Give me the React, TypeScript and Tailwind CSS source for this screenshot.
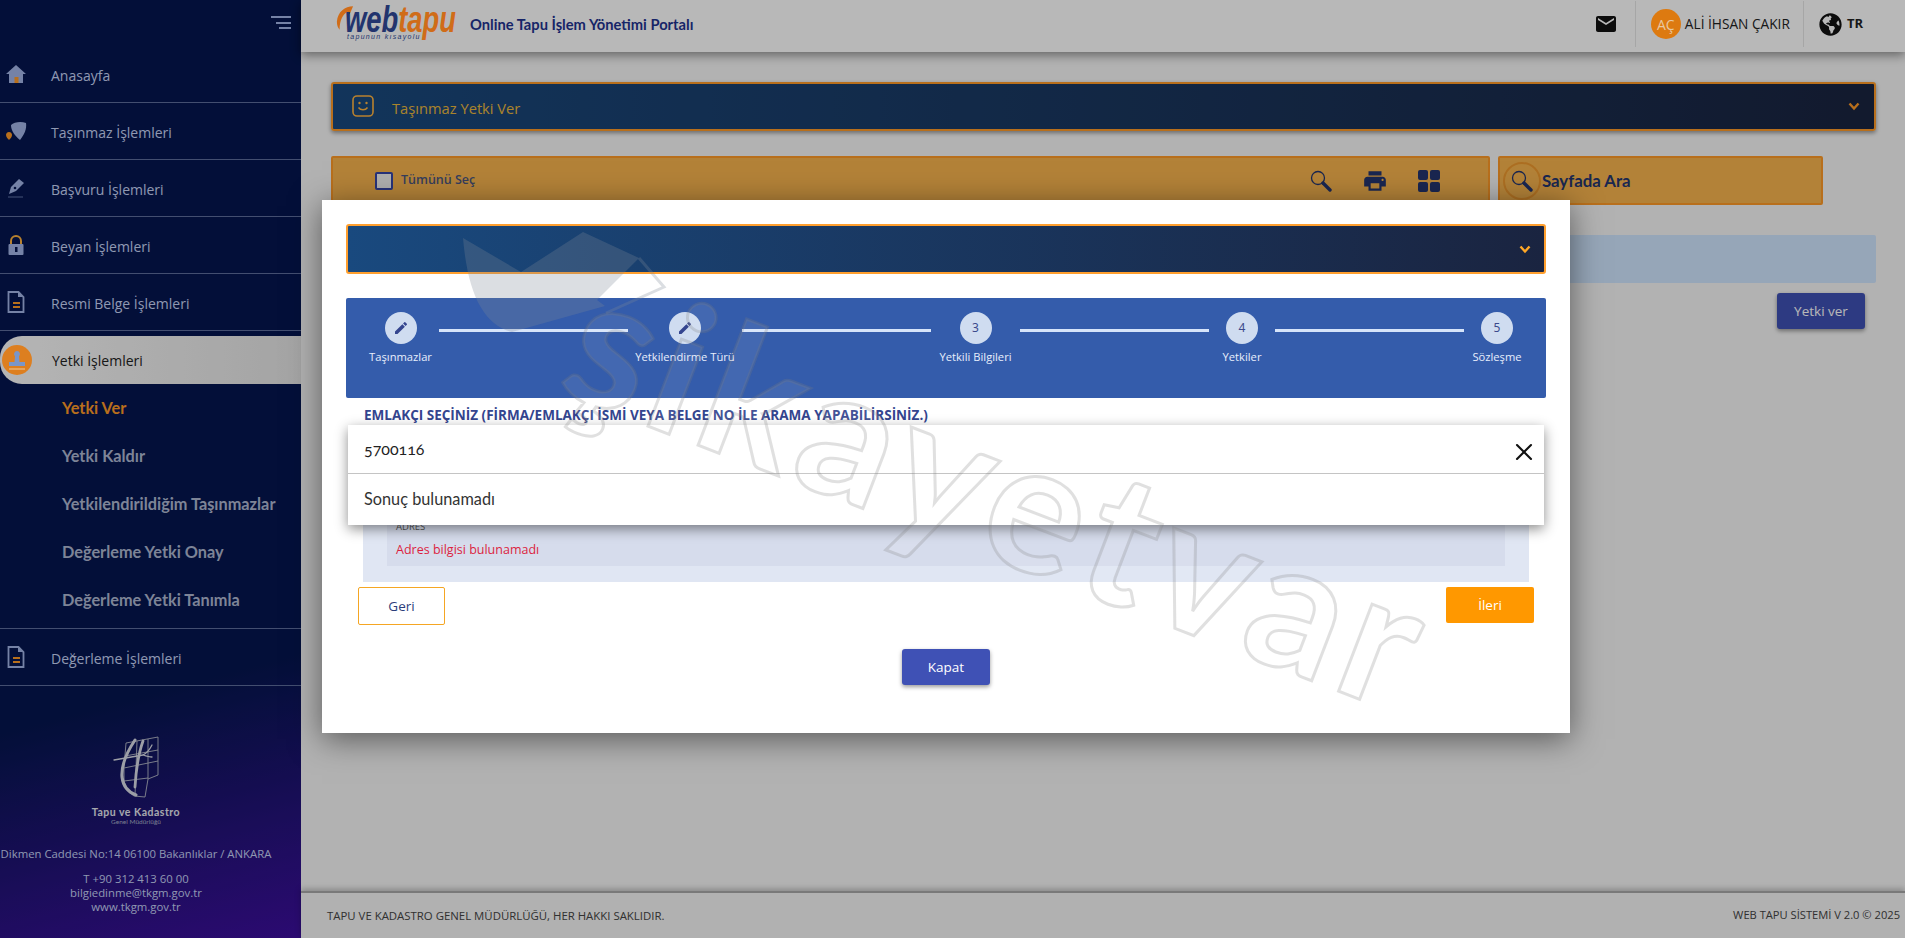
import React from "react";
import { MdEdit, MdEmail, MdPrint } from "react-icons/md";
import { FaGlobeAmericas } from "react-icons/fa";
import { X } from "lucide-react";

const body = "font-['Open_Sans','Noto_Sans',sans-serif]";
const lato = "font-['Lato','Open_Sans',sans-serif]";

function HomeIcon() {
  return (
    <svg width="22" height="20" viewBox="0 0 22 20">
      <path d="M11 1 1 10h3v9h14v-9h3z" fill="#a3b5e6" />
      <rect x="9.5" y="13" width="4" height="6" fill="#ff9a27" />
    </svg>
  );
}
function PinIcon() {
  return (
    <svg width="22" height="20" viewBox="0 0 22 20">
      <path d="M6 4c3-3 10-4 15-2 1 6-2 12-6 17C10 15 6 10 6 4z" fill="#a3b5e6" />
      <path d="M4 11c-2 0-3 1.500-3 3 0 2 2 4 3 5 1-1 3-3 3-5 0-1.500-1-3-3-3z" fill="#ff9a27" />
    </svg>
  );
}
function PenIcon() {
  return (
    <svg width="20" height="20" viewBox="0 0 20 20">
      <path d="M13 1l5 4-8 8-7 3 2-7z" fill="#a3b5e6" />
      <circle cx="9" cy="10" r="1.300" fill="#05164f" />
      <path d="M2 19h15" stroke="#a3b5e6" strokeWidth="0.600" />
    </svg>
  );
}
function LockIcon() {
  return (
    <svg width="18" height="21" viewBox="0 0 18 21">
      <path d="M4 9V6a5 5 0 0 1 10 0v3" fill="none" stroke="#ffb340" strokeWidth="2" />
      <rect x="1.500" y="9" width="15" height="11" rx="1" fill="#a3b5e6" />
      <rect x="8" y="12" width="2.500" height="5" fill="#05164f" />
    </svg>
  );
}
function DocIcon() {
  return (
    <svg width="18" height="22" viewBox="0 0 18 22">
      <path d="M1.500 1h10l5 5v15h-15z" fill="none" stroke="#a3b5e6" strokeWidth="1.800" />
      <path d="M11 1v5h5" fill="#a3b5e6" />
      <path d="M6 12h7M6 16h7" stroke="#ff9a27" strokeWidth="1.800" />
    </svg>
  );
}
function StampIcon() {
  return (
    <svg className="relative z-20" width="30" height="30" viewBox="0 0 30 30">
      <circle cx="15" cy="15" r="15" fill="#dd7f20" />
      <path d="M15 6a3 3 0 0 1 2 5.200l.5 5.800h5.500v4H7v-4h5.500l.5-5.800A3 3 0 0 1 15 6z" fill="#7a96c8" />
      <path d="M7 24h16" stroke="#e8b070" strokeWidth="1.500" />
    </svg>
  );
}
function Lens({ size = 22 }: { size?: number }) {
  return (
    <svg width={size} height={size} viewBox="0 0 22 22">
      <circle cx="8" cy="8" r="6.500" fill="none" stroke="#24356f" strokeWidth="1.300" />
      <path d="M13 13l7 7" stroke="#24356f" strokeWidth="3.400" strokeLinecap="round" />
    </svg>
  );
}
function Chevron({ color }: { color: string }) {
  return (
    <svg width="12" height="9" viewBox="0 0 12 9">
      <path d="M1.500 1.500 6 6.500l4.500-5" fill="none" stroke={color} strokeWidth="2.400" />
    </svg>
  );
}
function WebTapuLogo() {
  return (
    <div className="relative z-20 h-[42px] w-[122px] shrink-0">
      <svg className="absolute left-[1px] top-[2px]" width="18" height="26" viewBox="0 0 20 28">
        <path d="M19 1C10 1 2 7 1 18c0 4 1 7 3 9C4 16 8 9 13 7l2 3z" fill="#d06c18" />
      </svg>
      <div className="absolute left-[10px] top-[-3px] origin-left scale-x-[0.74] whitespace-nowrap font-['Liberation_Sans',sans-serif] text-[37px] font-bold italic leading-[40px]">
        <span className="text-[#22346e]">web</span>
        <span className="text-[#d06c18]">tapu</span>
      </div>
      <div className="absolute left-[12px] top-[29px] whitespace-nowrap font-['Liberation_Sans',sans-serif] text-[7px] italic leading-[9px] tracking-[1.300px] text-[#22346e]">
        tapunun kısayolu
      </div>
    </div>
  );
}
function KadastroLogo() {
  return (
    <svg width="46" height="63" viewBox="0 0 46 63">
      <g fill="none" stroke="#b9bdca" strokeWidth="0.900">
        <path d="M13 8 45 2v38l-10 4-3 18M13 8l-2 24v14q2 10 10 15l11 1M24 6l-2 55M35 4v40M12 21l33-6M11 33l34-7M11 46l24-3" />
      </g>
      <g fill="none" stroke="#d9dce6" strokeLinecap="round">
        <path d="M22 5C14 17 8 30 9 42c1 9 6 15 14 18" strokeWidth="3" />
        <path d="M30 6C25 20 23 35 22 52" strokeWidth="2.800" />
        <path d="M1 25 30 20M30 20c4-2 7-6 9-10M30 20c3 1 6 2 9 2" strokeWidth="1.300" />
      </g>
    </svg>
  );
}

const topMenu = [
  { label: "Anasayfa", icon: <HomeIcon /> },
  { label: "Taşınmaz İşlemleri", icon: <PinIcon /> },
  { label: "Başvuru İşlemleri", icon: <PenIcon /> },
  { label: "Beyan İşlemleri", icon: <LockIcon /> },
  { label: "Resmi Belge İşlemleri", icon: <DocIcon /> },
];
const subMenu = ["Yetki Ver", "Yetki Kaldır", "Yetkilendirildiğim Taşınmazlar", "Değerleme Yetki Onay", "Değerleme Yetki Tanımla"];

function MenuRow({ label, icon }: { label: string; icon: React.ReactNode }) {
  return (
    <div className="flex h-[57px] items-center border-b border-[#5d6c9c]">
      <div className="flex w-[51px] shrink-0 justify-center pr-[19px]">{icon}</div>
      <span className={`${body} pt-[2px] text-[14px] text-[#c7d3f5]`}>{label}</span>
    </div>
  );
}

function Sidebar() {
  return (
    <aside className="flex h-full w-[301px] shrink-0 flex-col bg-[linear-gradient(165deg,#05164f_0%,#05164f_72%,#3d0f9e_100%)]">
      <div className="flex h-[46px] flex-col items-end gap-[3.500px] pr-[10px] pt-[16px]">
        <div className="h-[2px] w-[20px] bg-[#a3b5e6]" />
        <div className="h-[2px] w-[15px] bg-[#a3b5e6]" />
        <div className="h-[2px] w-[12px] bg-[#a3b5e6]" />
      </div>
      {topMenu.map((m) => (
        <MenuRow key={m.label} label={m.label} icon={m.icon} />
      ))}
      <div className="mt-[5px] flex h-[48px] items-center rounded-l-[22px] bg-[linear-gradient(90deg,#fbfbfb,#e4e4e4)]">
        <div className="ml-[2px] w-[50px]">
          <StampIcon />
        </div>
        <span className={`${body} text-[14px] text-[#222]`}>Yetki İşlemleri</span>
      </div>
      <div className="border-b border-[#5d6c9c] pb-[4px] pl-[62px]">
        {subMenu.map((s, i) => (
          <div key={s} className={`${lato} flex h-[48px] items-center text-[16.300px] font-bold ${i === 0 ? "text-[#ff9a27]" : "text-[#aeb8d2]"}`}>
            {s}
          </div>
        ))}
      </div>
      <MenuRow label="Değerleme İşlemleri" icon={<DocIcon />} />
      <div className="mt-[49px] flex w-[272px] flex-col items-center">
        <KadastroLogo />
        <div className={`${lato} mt-[8px] text-[10.500px] font-bold leading-[12px] tracking-[0.500px] text-[#e6e8f0]`}>Tapu ve Kadastro</div>
        <div className={`${lato} text-[6.500px] leading-[8px] text-[#a9b0c8]`}>Genel Müdürlüğü</div>
        <div className={`${body} mt-[20px] whitespace-nowrap text-[11.350px] leading-[15px] text-[#c7d3f5]`}>Dikmen Caddesi No:14 06100 Bakanlıklar / ANKARA</div>
        <div className={`${body} mt-[11px] text-center text-[11.350px] leading-[14px] text-[#c7d3f5]`}>
          <div>T +90 312 413 60 00</div>
          <div>bilgiedinme@tkgm.gov.tr</div>
          <div>www.tkgm.gov.tr</div>
        </div>
      </div>
    </aside>
  );
}

function Header() {
  return (
    <header className="relative flex h-[52px] shrink-0 items-center bg-white pb-[4px] pl-[34px] shadow-[0_3px_10px_rgba(0,0,0,0.45)]">
      <WebTapuLogo />
      <span className={`${lato} ml-[13px] text-[14.700px] font-bold text-[#1f3390]`}>Online Tapu İşlem Yönetimi Portalı</span>
      <div className="ml-auto flex h-full items-center">
        <MdEmail className="text-[24px] text-[#111]" />
        <div className="ml-[17px] h-[46px] w-px bg-[#e6e6e6]" />
        <div className={`${body} relative z-20 ml-[15px] flex h-[30px] w-[30px] items-center justify-center rounded-full bg-[#dd7a10] text-[14px] text-[#e8c8a0]`}>AÇ</div>
        <span className={`${body} ml-[4px] text-[13.700px] text-[#222]`}>ALİ İHSAN ÇAKIR</span>
        <div className="ml-[13px] h-[46px] w-px bg-[#e6e6e6]" />
        <FaGlobeAmericas className="ml-[15px] text-[23px] text-[#111]" />
        <span className={`${body} ml-[5px] mr-[42px] text-[13px] font-bold text-[#222]`}>TR</span>
      </div>
    </header>
  );
}

function Content() {
  return (
    <div className="flex flex-1 flex-col pl-[30px] pr-[29px]">
      <div className="mt-[30px] flex h-[49px] items-center justify-between rounded-[3px] border-2 border-[#ff9a27] bg-[linear-gradient(90deg,#19497e,#1a2440)] pl-[19px] pr-[14px] shadow-[0_2px_4px_rgba(0,0,0,0.4)]">
        <div className="flex items-center">
          <svg width="22" height="22" viewBox="0 0 22 22">
            <rect x="1" y="1" width="20" height="20" rx="4" fill="none" stroke="#ffb340" strokeWidth="1.600" />
            <circle cx="7.500" cy="8" r="1.200" fill="#ffb340" />
            <circle cx="14.500" cy="8" r="1.200" fill="#ffb340" />
            <path d="M6.500 12.500c2 3 7 3 9 0" fill="none" stroke="#ffb340" strokeWidth="1.400" />
          </svg>
          <span className={`${body} ml-[18px] pt-[3px] text-[14.700px] text-[#eab83c]`}>Taşınmaz Yetki Ver</span>
        </div>
        <Chevron color="#ff9a27" />
      </div>
      <div className="mt-[25px] flex gap-2">
        <div className="flex h-[49px] w-[1159px] items-center rounded-[2px] border-2 border-[#ff9a27] bg-[#f8b54e] pl-[42px] pr-[48px]">
          <div className="h-[18px] w-[18px] rounded-[2px] border-2 border-[#3746a8] bg-[#f1f1f1]" />
          <span className={`${body} ml-[8px] text-[12.500px] font-semibold text-[#4a5580]`}>Tümünü Seç</span>
          <div className="ml-auto flex items-center gap-[30px] text-[#24356f]">
            <Lens />
            <MdPrint className="text-[26px]" />
            <svg width="22" height="22" viewBox="0 0 22 22" fill="#24356f">
              <rect x="0" y="0" width="10" height="10" rx="2" />
              <rect x="12" y="0" width="10" height="10" rx="2" />
              <rect x="0" y="12" width="10" height="10" rx="2" />
              <rect x="12" y="12" width="10" height="10" rx="2" />
            </svg>
          </div>
        </div>
        <div className="flex h-[49px] w-[325px] items-center rounded-[2px] border-2 border-[#ff9a27] bg-[#f8b54e] pl-[3px]">
          <div className="flex h-[38px] w-[38px] items-center justify-center rounded-full border-2 border-[#f09a30]">
            <Lens />
          </div>
          <span className={`${lato} ml-[1px] text-[16.800px] font-bold text-[#24356f]`}>Sayfada Ara</span>
        </div>
      </div>
      <div className="mt-[30px] h-[48px] rounded-[2px] bg-[#d0e6ff]" />
      <div className="mr-[11px] mt-[10px] flex justify-end">
        <div className={`${body} flex h-[36px] w-[88px] items-center justify-center rounded-[3px] bg-[#3f51b5] text-[13.500px] text-white shadow-[0_2px_4px_rgba(0,0,0,0.4)]`}>Yetki ver</div>
      </div>
    </div>
  );
}

function Footer() {
  return (
    <footer className={`${body} flex h-[47px] shrink-0 items-center justify-between border-t-2 border-[#a8a8a8] bg-[#f5f5f5] pl-[26px] pr-[5px] text-[#444] shadow-[0_-2px_6px_rgba(0,0,0,0.25)]`}>
      <span className="text-[11.400px]">TAPU VE KADASTRO GENEL MÜDÜRLÜĞÜ, HER HAKKI SAKLIDIR.</span>
      <span className="text-[11.150px]">WEB TAPU SİSTEMİ V 2.0 © 2025</span>
    </footer>
  );
}

const steps = [
  { label: "Taşınmazlar", w: "w-[61px]", mark: "edit" },
  { label: "Yetkilendirme Türü", w: "w-[98px]", mark: "edit" },
  { label: "Yetkili Bilgileri", w: "w-[73px]", mark: "3" },
  { label: "Yetkiler", w: "w-[50px]", mark: "4" },
  { label: "Sözleşme", w: "w-[50px]", mark: "5" },
];

function Stepper() {
  return (
    <div className="mt-[24px] flex h-[100px] gap-2 rounded-[2px] bg-[#345cab] px-6 pt-[14px]">
      {steps.map((s, i) => (
        <React.Fragment key={s.label}>
          <div className={`flex ${s.w} shrink-0 flex-col items-center`}>
            <div className="flex h-[32px] w-[32px] shrink-0 items-center justify-center rounded-full bg-[#cfdcf0] text-[12px] text-[#3b4a8c]">
              {s.mark === "edit" ? <MdEdit className="text-[16px] text-[#34458f]" /> : s.mark}
            </div>
            <div className={`${body} mt-[5px] whitespace-nowrap text-[11.200px] leading-[16px] text-[#e8eefc]`}>{s.label}</div>
          </div>
          {i < steps.length - 1 && <div className="mt-[17px] h-[3px] flex-1 bg-[#d6e4fa]" />}
        </React.Fragment>
      ))}
    </div>
  );
}

function Modal() {
  return (
    <div className="relative h-[533px] w-[1248px] bg-white pl-[24px] pr-[24px] pt-[24px] shadow-[0_6px_30px_rgba(0,0,0,0.5)]">
      <div className="flex h-[50px] items-center justify-end rounded-[3px] border-2 border-[#ff9f2e] bg-[linear-gradient(90deg,#19497e,#1a2440)] pr-[13px]">
        <Chevron color="#ffa726" />
      </div>
      <Stepper />
      <div className={`${body} ml-[18px] mt-[7px] text-[13.500px] font-bold leading-[20px] text-[#34458f]`}>
        EMLAKÇI SEÇİNİZ (FİRMA/EMLAKÇI İSMİ VEYA BELGE NO İLE ARAMA YAPABİLİRSİNİZ.)
      </div>
      <div className="mx-[17px] flex h-[157px] flex-col bg-[#e0e6f3] px-[24px] pb-[16px]">
        <div className="flex flex-1 flex-col justify-end bg-[#d6dcec] pb-[6px] pl-[9px]">
          <div className={`${body} text-[9.500px] leading-[14px] text-[#555]`}>ADRES</div>
          <div className={`${body} mt-[6px] text-[12.500px] leading-[20px] text-[#dc1f3f]`}>Adres bilgisi bulunamadı</div>
        </div>
      </div>
      <div className="mt-[5px] flex items-start justify-between px-[12px]">
        <div className={`${body} flex h-[38px] w-[87px] items-center justify-center rounded-[2px] border border-[#f5a623] text-[13.500px] text-[#2c3d7a]`}>Geri</div>
        <div className={`${body} flex h-[36px] w-[88px] items-center justify-center rounded-[2px] bg-[#ff9800] text-[13.500px] text-white`}>İleri</div>
      </div>
      <div className="mt-[24px] flex justify-center">
        <div className={`${body} flex h-[36px] w-[88px] items-center justify-center rounded-[3px] bg-[#3f51b5] text-[13.500px] text-white shadow-[0_2px_4px_rgba(0,0,0,0.4)]`}>Kapat</div>
      </div>
      <div className="absolute left-[26px] top-[225px] w-[1196px] bg-white shadow-[0_4px_12px_rgba(0,0,0,0.45)]">
        <div className="flex h-[49px] items-center justify-between border-b border-[#c4c4c4] pl-[16px] pr-[6px]">
          <span className={`${lato} text-[16px] text-[#222] oldstyle-nums`}>5700116</span>
          <X className="mt-[6px] h-[28px] w-[28px] text-[#111]" strokeWidth={1.800} />
        </div>
        <div className={`${lato} flex h-[51px] items-center pl-[16px] text-[16.300px] text-[#333]`}>Sonuç bulunamadı</div>
      </div>
    </div>
  );
}

function Watermark() {
  return (
    <>
      <svg className="pointer-events-none absolute left-[455px] top-[225px]" width="220" height="120" viewBox="0 0 220 120">
        <path d="M8 13 66 47 128 7l56 26-42 42 8 6-93 26C30 100 13 72 8 13z" fill="rgba(125,135,150,0.28)" />
        <path d="M184 33l25 29-58 26" fill="none" stroke="rgba(125,135,150,0.28)" strokeWidth="3" />
      </svg>
      <div className="pointer-events-none absolute left-[580px] top-[225px] origin-left rotate-[21deg] whitespace-nowrap font-['Lato',sans-serif] text-[182px] font-bold leading-[200px] tracking-[8px] text-[rgba(255,255,255,0.08)] [-webkit-text-stroke:3px_rgba(125,125,125,0.24)]">
        şikayetvar
      </div>
    </>
  );
}

export default function App() {
  return (
    <div className="relative flex h-[938px] w-full overflow-hidden bg-[#f7f7f7]">
      <Sidebar />
      <main className="flex h-full min-w-0 flex-1 flex-col">
        <Header />
        <Content />
        <Footer />
      </main>
      <div className="absolute inset-0 bg-black/[0.28] pl-[322px] pt-[200px]">
        <Modal />
      </div>
      <Watermark />
    </div>
  );
}
